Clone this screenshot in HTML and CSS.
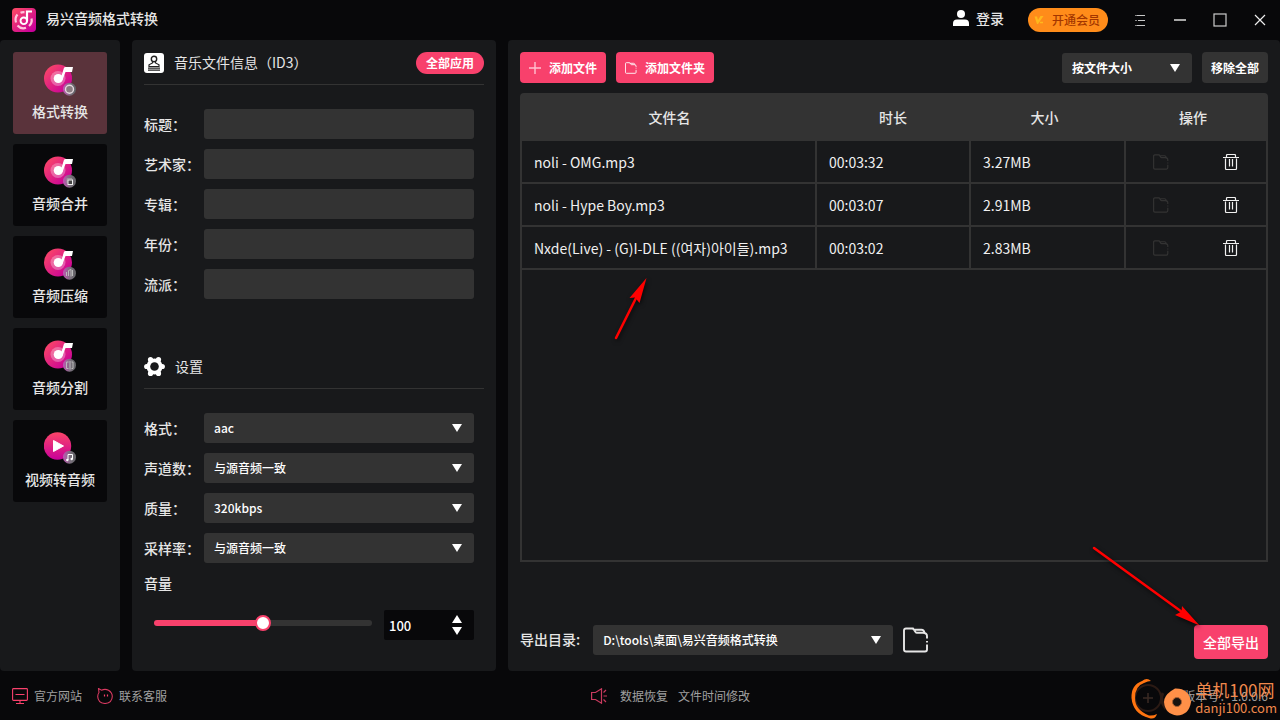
FILE: index.html
```html
<!DOCTYPE html>
<html lang="zh-CN">
<head>
<meta charset="utf-8">
<title>易兴音频格式转换</title>
<link rel="stylesheet" href="styles.css">
</head>
<body>
<svg class="defs" aria-hidden="true">
  <defs>
    <linearGradient id="disc" x1="0" y1="0" x2="1" y2="1"><stop offset="0.1" stop-color="#fa4568"/><stop offset="0.9" stop-color="#c8009a"/></linearGradient>
    <linearGradient id="play" x1="0" y1="0" x2="0" y2="1"><stop offset="0" stop-color="#fa4568"/><stop offset="1" stop-color="#c8009a"/></linearGradient>
    <linearGradient id="badge" x1="0" y1="0" x2="1" y2="0"><stop offset="0" stop-color="#c056b4"/><stop offset="0.6" stop-color="#77707a"/><stop offset="1" stop-color="#5e5e62"/></linearGradient>
    <symbol id="note" viewBox="0 0 32 32">
      <circle cx="14" cy="14.500" r="14" fill="url(#disc)"/>
      <circle cx="14" cy="14.500" r="7.500" fill="#fff" opacity=".3"/>
      <circle cx="14.300" cy="14.500" r="4.600" fill="#fff"/>
      <path d="M16.500 15 20 3.800Q20.500 3 21.500 3H29L28 8H21.500L18.500 16Z" fill="#fff"/>
      <circle cx="25.500" cy="25.200" r="6.500" fill="url(#badge)"/>
    </symbol>
    <symbol id="folder" viewBox="0 0 26 26">
      <path d="M24 17.500V22.500Q24 24.500 22 24.500H3Q1 24.500 1 22.500V3.500Q1 1.500 3 1.500H10L12.500 5Q13 5.800 14 5.800H20Q24 6 24 9V11.500M24 14V15.500M10 1.800Q10.500 2.800 12 2.800H18.500Q21 2.800 21.500 5.800" fill="none" stroke="currentColor" stroke-width="1.900"/>
    </symbol>
    <symbol id="trash" viewBox="0 0 16 16">
      <path d="M0 3.500H16M3.500 3V1.500Q3.500 .500 4.500 .500H11.500Q12.500 .500 12.500 1.500V3M2.500 4.500V14.500Q2.500 15.500 3.500 15.500H12.500Q13.500 15.500 13.500 14.500V4.500M6.500 5V12.500M9.500 5V12.500" fill="none" stroke="currentColor" stroke-width="1.200"/>
    </symbol>
  </defs>
</svg>

<header class="titlebar">
  <svg class="logo" viewBox="0 0 24 24" aria-hidden="true">
    <rect width="24" height="24" rx="4" fill="url(#disc)"/>
    <path d="M5.500 6.500Q2.500 10 4 14.500M5.500 17.500Q9 21.500 14 19.800M17 18Q20.500 15 19.500 10.500M8.500 4.800Q10.500 4 12.500 4.300" fill="none" stroke="#ffc4dc" stroke-width="2.200"/>
    <circle cx="11.800" cy="12.800" r="3.300" fill="none" stroke="#fff" stroke-width="1.900"/>
    <path d="M15 13V3.500H20" fill="none" stroke="#fff" stroke-width="2.200"/>
  </svg>
  <h1 class="app-name">易兴音频格式转换</h1>
  <button class="plain login" type="button">
    <svg width="16" height="16" viewBox="0 0 16 16" aria-hidden="true"><circle cx="8" cy="4" r="4" fill="#fff"/><path d="M0 16V13.500Q0 9.500 4 9.500H12Q16 9.500 16 13.500V16Z" fill="#fff"/></svg>
    登录
  </button>
  <button class="vip" type="button">
    <svg width="10" height="10" viewBox="0 0 10 10" aria-hidden="true"><path d="M.500 1.500H3L4 5 6.500 1H9.500L4 9H3Z" fill="#ffb81c"/><path d="M6 7.500H9" stroke="#ffb81c" stroke-width="1.500"/></svg>
    开通会员
  </button>
  <nav class="window-controls" aria-label="窗口">
    <button class="plain" type="button" aria-label="菜单"><svg width="14" height="14" viewBox="0 0 14 14"><path d="M4 2.500H12M5 7.500H12M4 12.500H12" stroke="#c8c8c8"/><path d="M2 2.500H4M2 7.500H4M2 12.500H4" stroke="#888"/></svg></button>
    <button class="plain" type="button" aria-label="最小化"><svg width="14" height="14" viewBox="0 0 14 14"><path d="M1 7H13" stroke="#ddd" stroke-width="1.500"/></svg></button>
    <button class="plain" type="button" aria-label="最大化"><svg width="14" height="14" viewBox="0 0 14 14"><rect x="1" y="1" width="12" height="12" fill="none" stroke="#ccc" stroke-width="1.200"/></svg></button>
    <button class="plain" type="button" aria-label="关闭"><svg width="14" height="14" viewBox="0 0 14 14"><path d="M2 2 12 12M12 2 2 12" stroke="#eee" stroke-width="1.200"/></svg></button>
  </nav>
</header>

<main class="workspace">
  <nav class="sidebar panel" aria-label="功能">
    <button class="tool active" type="button">
      <svg class="tool-icon" viewBox="0 0 32 32"><use href="#note"/><circle cx="25.500" cy="25.200" r="4" fill="#8a7b80" stroke="#e4d9de" stroke-width="1.400"/></svg>
      格式转换
    </button>
    <button class="tool" type="button">
      <svg class="tool-icon" viewBox="0 0 32 32"><use href="#note"/><path d="M23 27V22.500H28" fill="none" stroke="#999"/><rect x="24" y="24" width="4.500" height="4.500" fill="#444" stroke="#eee"/></svg>
      音频合并
    </button>
    <button class="tool" type="button">
      <svg class="tool-icon" viewBox="0 0 32 32"><use href="#note"/><path d="M22.500 28V24M24.500 28V22.500L27 21.500V28.500M28.500 22V28" fill="none" stroke="#bbb"/></svg>
      音频压缩
    </button>
    <button class="tool" type="button">
      <svg class="tool-icon" viewBox="0 0 32 32"><use href="#note"/><path d="M24.500 22H22.500V28.500H24.500M27.500 22H29V28.500H27.500M26 21V29.500" fill="none" stroke="#bbb"/></svg>
      音频分割
    </button>
    <button class="tool" type="button">
      <svg class="tool-icon" viewBox="0 0 32 32"><circle cx="13.500" cy="14" r="13.700" fill="url(#play)"/><path d="M9.500 8.500V19.500L19.500 14Z" fill="#fff" stroke="#fff" stroke-linejoin="round"/><circle cx="25.500" cy="25.200" r="6.500" fill="url(#badge)"/><path d="M24 28V22.500H28.500V27" fill="none" stroke="#fff"/><circle cx="23.300" cy="28" r="1.200" fill="#fff"/><circle cx="27.700" cy="27" r="1.200" fill="#fff"/></svg>
      视频转音频
    </button>
  </nav>

  <section class="details panel">
    <div class="section-head">
      <svg width="20" height="20" viewBox="0 0 20 20" aria-hidden="true"><rect width="20" height="20" rx="3" fill="#fff"/><circle cx="10" cy="6" r="2.700" fill="none" stroke="#222" stroke-width="1.400"/><path d="M8.500 8.500V10L5 11.800V13.500H15V11.800L11.500 10V8.500M4 15.200H16M4 17.200H16" fill="none" stroke="#222" stroke-width="1.200"/></svg>
      <h2>音乐文件信息（ID3）</h2>
      <button class="pill" type="button">全部应用</button>
    </div>
    <form class="fields">
      <div class="field"><label for="title">标题：</label><input class="control" id="title" type="text"></div>
      <div class="field"><label for="artist">艺术家：</label><input class="control" id="artist" type="text"></div>
      <div class="field"><label for="album">专辑：</label><input class="control" id="album" type="text"></div>
      <div class="field"><label for="year">年份：</label><input class="control" id="year" type="text"></div>
      <div class="field"><label for="genre">流派：</label><input class="control" id="genre" type="text"></div>
    </form>

    <div class="section-head settings-head">
      <svg width="21" height="20" viewBox="0 0 21 20" aria-hidden="true"><g fill="#fff"><circle cx="10.500" cy="9.500" r="8"/><circle cx="2.700" cy="9.500" r="2.600"/><circle cx="18.300" cy="9.500" r="2.600"/><circle cx="6.500" cy="2.600" r="2.600"/><circle cx="14.500" cy="2.600" r="2.600"/><circle cx="6.500" cy="16.400" r="2.600"/><circle cx="14.500" cy="16.400" r="2.600"/></g><circle cx="10.500" cy="9.500" r="4.300" fill="#18191b"/></svg>
      <h2>设置</h2>
    </div>
    <form class="fields">
      <div class="field"><label for="format">格式：</label><span class="picker"><select class="control" id="format"><option>aac</option></select></span></div>
      <div class="field"><label for="channels">声道数：</label><span class="picker"><select class="control" id="channels"><option>与源音频一致</option></select></span></div>
      <div class="field"><label for="quality">质量：</label><span class="picker"><select class="control" id="quality"><option>320kbps</option></select></span></div>
      <div class="field"><label for="rate">采样率：</label><span class="picker"><select class="control" id="rate"><option>与源音频一致</option></select></span></div>
    </form>
    <label class="volume-label" for="volume">音量</label>
    <div class="volume">
      <input class="slider" id="volume" type="range" min="0" max="200" value="100">
      <span class="stepper"><input type="number" value="100" aria-label="音量数值"></span>
    </div>
  </section>

  <section class="files panel">
    <div class="toolbar">
      <button class="primary" type="button"><svg width="12" height="12" viewBox="0 0 12 12" aria-hidden="true"><path d="M6 0V12M0 6H12" stroke="#ffc0cf" stroke-width="1.400"/></svg>添加文件</button>
      <button class="primary" type="button"><svg width="12" height="12" aria-hidden="true"><use href="#folder"/></svg>添加文件夹</button>
      <span class="picker sort"><select class="control" aria-label="排序"><option>按文件大小</option></select></span>
      <button class="secondary" type="button">移除全部</button>
    </div>
    <div class="list">
      <table>
        <colgroup><col><col class="col-time"><col class="col-size"><col class="col-action"></colgroup>
        <thead><tr><th>文件名</th><th>时长</th><th>大小</th><th>操作</th></tr></thead>
        <tbody>
          <tr><td>noli - OMG.mp3</td><td>00:03:32</td><td>3.27MB</td><td><div class="actions"><button class="plain faded" type="button" aria-label="打开文件夹" disabled><svg width="16" height="16"><use href="#folder"/></svg></button><button class="plain" type="button" aria-label="删除"><svg width="16" height="16"><use href="#trash"/></svg></button></div></td></tr>
          <tr><td>noli - Hype Boy.mp3</td><td>00:03:07</td><td>2.91MB</td><td><div class="actions"><button class="plain faded" type="button" aria-label="打开文件夹" disabled><svg width="16" height="16"><use href="#folder"/></svg></button><button class="plain" type="button" aria-label="删除"><svg width="16" height="16"><use href="#trash"/></svg></button></div></td></tr>
          <tr><td>Nxde(Live) - (G)I-DLE ((여자)아이들).mp3</td><td>00:03:02</td><td>2.83MB</td><td><div class="actions"><button class="plain faded" type="button" aria-label="打开文件夹" disabled><svg width="16" height="16"><use href="#folder"/></svg></button><button class="plain" type="button" aria-label="删除"><svg width="16" height="16"><use href="#trash"/></svg></button></div></td></tr>
        </tbody>
      </table>
    </div>
    <div class="export">
      <label for="target">导出目录:</label>
      <span class="picker target"><select class="control" id="target"><option>D:\tools\桌面\易兴音频格式转换</option></select></span>
      <button class="plain" type="button" aria-label="浏览"><svg width="26" height="26"><use href="#folder"/></svg></button>
      <button class="primary export-all" type="button">全部导出</button>
    </div>
  </section>
</main>

<footer class="statusbar">
  <div class="links">
    <a href="#"><svg width="16" height="16" viewBox="0 0 16 16" aria-hidden="true"><path d="M1.500 .600H14.500Q15.400 .600 15.400 1.500V11.500Q15.400 12.400 14.500 12.400H1.500Q.600 12.400 .600 11.500V1.500Q.600 .600 1.500 .600ZM3.500 6.500H12.500M8 12.500V15.500M4 15.500H12" fill="none" stroke="#f8416c" stroke-width="1.100"/></svg>官方网站</a>
    <a href="#"><svg width="16" height="16" viewBox="0 0 16 16" aria-hidden="true"><path d="M2 4.500 1.500 .500 4.500 2.200Q8 .500 11.500 2.200 15.300 4.500 15.300 8.500 15 15 8 15.500 1 15 .700 8.500 .800 6 2 4.500Z" fill="none" stroke="#d93a61" stroke-width="1.100"/><path d="M7.500 6.500V8.500M10.500 6.500V8.500" stroke="#f8416c" stroke-width="1.200"/></svg>联系客服</a>
  </div>
  <div class="links news">
    <svg width="16" height="16" viewBox="0 0 16 16" aria-hidden="true"><path d="M.600 4.500H4.500L10.500 .800V15.200L4.500 11.500H.600ZM12.500 8H16M12.500 4.500 15 2M12.500 11.500 15 14" fill="none" stroke="#c93a5e" stroke-width="1.200"/></svg>
    <a href="#">数据恢复</a>
    <a href="#">文件时间修改</a>
  </div>
  <span class="version">版本号：1.0.0.6</span>
</footer>

<svg class="pointer pointer-file" width="50" height="76" viewBox="610 270 50 76" aria-hidden="true"><path d="M616 338 636 298" stroke="#f00" stroke-width="2.500" stroke-linecap="round"/><path d="M646.500 278 629.500 298 635 297.500 639.500 303Z" fill="#f00"/></svg>
<svg class="pointer pointer-export" width="120" height="90" viewBox="1085 540 120 90" aria-hidden="true"><path d="M1094 548 1182 612" stroke="#f00" stroke-width="2.500" stroke-linecap="round"/><path d="M1199.500 625.500 1182 606 1181.500 611.500 1175 615Z" fill="#f00"/></svg>
<div class="watermark">
  <svg width="62" height="44" viewBox="1130 676 62 44" aria-hidden="true"><circle cx="1149" cy="698" r="13" fill="none" stroke="#2b1a14" stroke-width="2"/><path d="M1149 693V703M1144 698H1154" stroke="#3a2a24" stroke-width="1.500"/><path d="M1152 681Q1148 677 1143 681 1132 685 1132.500 698 1134 714 1150 718 1156 720 1158 714 1154 716 1150 715.500 1136 710 1136 698 1136 686 1145 683Q1149 681 1152 681Z" fill="#ff7410"/><path d="M1167 709Q1160 700 1164 693" fill="none" stroke="#2b1a14" stroke-width="3"/><path d="M1172 691 1176 688.500Q1190 688 1192 702 1190 715 1178 715.500 1166 714 1165 702 1165 696 1172 691Z" fill="#ff9048"/><circle cx="1178" cy="702" r="4.500" fill="#18120f" stroke="#a65e32"/></svg>
  <div class="watermark-text"><span>单机100网</span><small>danji100.com</small></div>
</div>
</body>
</html>
```
FILE: styles.css
```css
* { box-sizing: border-box; }

body {
  margin: 0;
  min-height: 100vh;
  display: flex;
  flex-direction: column;
  position: relative;
  overflow: hidden;
  background: #08080a;
  color: #e6e6e6;
  font: 500 14px/20px "Noto Sans CJK SC", "Noto Sans CJK KR", sans-serif;
}

button, input, select { font: inherit; color: inherit; }
button { border: 0; padding: 0; cursor: pointer; }
svg { display: block; flex: none; }
h1, h2 { margin: 0; font: inherit; }
a { color: inherit; text-decoration: none; }

.defs { position: absolute; width: 0; height: 0; }
.plain { background: none; display: flex; align-items: center; justify-content: center; }

.titlebar { height: 40px; display: flex; align-items: center; padding: 0 10px 0 12px; }
.logo { width: 24px; height: 24px; }
.app-name { margin-left: 10px; padding-bottom: 4px; }
.login { margin-left: auto; gap: 7px; padding-bottom: 4px; }
.vip {
  height: 24px;
  margin: 0 22px 0 24px;
  padding: 0 8px 0 6px;
  display: flex;
  align-items: center;
  gap: 8px;
  border-radius: 12px;
  background: #ff8c1a;
  color: #a33600;
  font-size: 12px;
}
.window-controls { display: flex; gap: 20px; }
.window-controls button { width: 20px; height: 20px; }

.workspace { flex: 1; display: flex; gap: 12px; }
.panel { background: #18191b; border-radius: 4px; padding: 12px; }

.sidebar { flex: 0 0 120px; display: flex; flex-direction: column; gap: 10px; padding: 12px 13px; }
.tool {
  height: 82px;
  display: flex;
  flex-direction: column;
  align-items: center;
  gap: 5px;
  padding-top: 12px;
  border-radius: 3px;
  background: #08080a;
}
.tool.active { background: #5a333b; }
.tool-icon { width: 32px; height: 32px; }

.details { flex: 0 0 364px; }
.section-head { display: flex; align-items: center; gap: 10px; height: 33px; padding-bottom: 10px; border-bottom: 1px solid #333; }
.section-head h2 { padding-bottom: 2px; font-weight: 400; }
.settings-head { margin-top: 57px; }
.pill { margin-left: auto; height: 22px; padding: 0 10px; border-radius: 11px; background: #f8416c; color: #fff; font-size: 12px; font-weight: 700; }
.fields { display: flex; flex-direction: column; gap: 10px; padding: 24px 10px 0 0; }
.field { display: flex; align-items: center; }
.field label { flex: 0 0 60px; padding-bottom: 1px; white-space: nowrap; }
.control {
  width: 100%;
  height: 30px;
  padding: 0 10px;
  border: 0;
  border-radius: 3px;
  background: #333;
  color: #fff;
  font-size: 12px;
  font-weight: 500;
  appearance: none;
}
.picker { position: relative; flex: 1; }
.picker select { display: block; }
.picker::after {
  content: "";
  position: absolute;
  top: 11px;
  right: 12px;
  border: 5px solid transparent;
  border-top: 8px solid #fff;
  border-bottom: 0;
  pointer-events: none;
}
.volume-label { display: block; margin-top: 10px; }
.volume { display: flex; align-items: center; gap: 12px; margin-top: 17px; padding: 0 10px; }
.slider { flex: 1; min-width: 0; height: 16px; margin: 0 0 4px; appearance: none; background: none; }
.slider::-webkit-slider-runnable-track { height: 6px; border-radius: 3px; background: linear-gradient(90deg, #f8416c 50%, #333 50%); }
.slider::-webkit-slider-thumb { appearance: none; width: 16px; height: 16px; margin-top: -5px; border: 2px solid #f8416c; border-radius: 50%; background: #fff; }
.stepper { position: relative; flex: 0 0 90px; }
.stepper input {
  display: block;
  width: 100%;
  height: 30px;
  padding: 0 24px 0 5px;
  border: 0;
  border-radius: 2px;
  background: #08080a;
  color: #fff;
  font-size: 13px;
  appearance: textfield;
}
.stepper input::-webkit-inner-spin-button { appearance: none; }
.stepper::before, .stepper::after { content: ""; position: absolute; right: 12px; border: 5px solid transparent; pointer-events: none; }
.stepper::before { top: 5px; border-bottom: 8px solid #fff; border-top: 0; }
.stepper::after { bottom: 5px; border-top: 8px solid #fff; border-bottom: 0; }

.files { flex: 1; min-width: 0; display: flex; flex-direction: column; }
.toolbar { display: flex; align-items: center; gap: 10px; }
.primary, .secondary { height: 31px; padding: 0 9px; display: flex; align-items: center; gap: 8px; border-radius: 4px; color: #fff; font-size: 12px; font-weight: 700; }
.primary { background: #f8416c; }
.secondary { background: #333; }
.sort { flex: 0 0 130px; margin-left: auto; }
.sort .control { font-weight: 700; }

.list { flex: 1; margin-top: 10px; border: 2px solid #333; border-radius: 4px 4px 0 0; }
table { width: 100%; table-layout: fixed; border-collapse: separate; border-spacing: 0; }
.col-time { width: 154px; }
.col-size { width: 155px; }
.col-action { width: 142px; }
th { height: 46px; padding: 0 0 2px 2px; background: #333; font-weight: 500; }
th:nth-child(n+3) { padding-right: 6px; }
td { height: 43px; padding: 0 12px; border-bottom: 2px solid #333; color: #f0f0f0; font-weight: 400; }
td + td { border-left: 2px solid #333; }
.actions { display: flex; justify-content: space-between; padding: 0 15px; }
.faded { color: #333; }

.export { display: flex; align-items: flex-start; margin-top: 63px; }
.export label { line-height: 28px; }
.target { flex: 0 1 300px; margin: 0 10px 0 13px; }
.export .plain { height: 30px; }
.export-all { height: 34px; margin-left: auto; font-size: 14px; font-weight: 500; }

.statusbar { height: 49px; display: grid; grid-template-columns: 1fr auto 1fr; align-items: center; padding: 0 12px; color: #a0a0a0; font-size: 12px; font-weight: 400; }
.links { display: flex; align-items: center; gap: 15px; }
.links a { display: flex; align-items: center; gap: 6px; }
.news { gap: 10px; padding-left: 61px; }
.news svg { margin-right: 3px; }
.version { justify-self: end; }

.pointer { position: absolute; filter: drop-shadow(1px 2px 2px #000a); pointer-events: none; }
.pointer-file { left: 610px; top: 270px; }
.pointer-export { right: 75px; bottom: 90px; }
.watermark { position: absolute; right: 3px; bottom: 0; display: flex; align-items: flex-start; gap: 4px; color: #f0884c; font-weight: 400; pointer-events: none; }
.watermark-text { display: flex; flex-direction: column; padding-top: 4px; font-size: 17px; line-height: 20px; }
.watermark-text small { font: 13px/16px "Noto Sans CJK SC", sans-serif; }
```
